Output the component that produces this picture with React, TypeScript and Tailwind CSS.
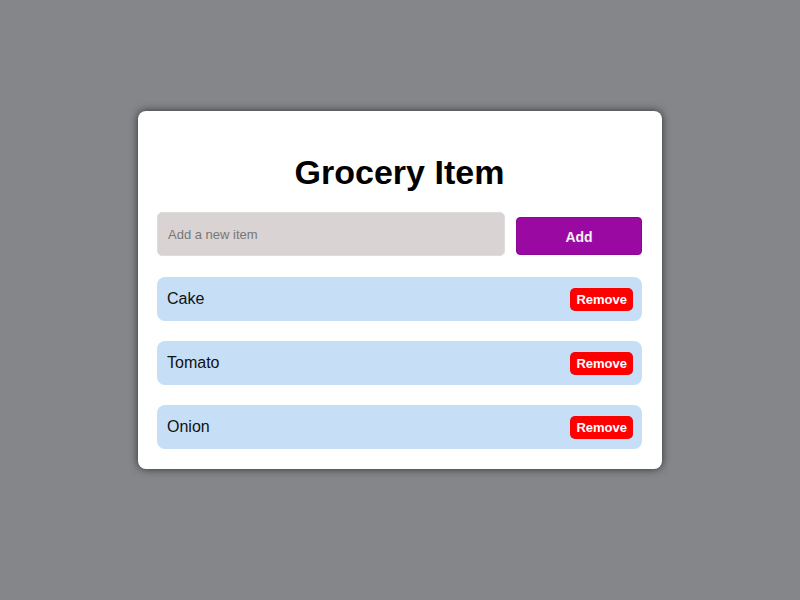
import React, { useState } from 'react';

const GroceryApp: React.FC = () => {
  const [items, setItems] = useState<string[]>(['Cake', 'Tomato', 'Onion']);
  const [text, setText] = useState('');

  const addItem = () => {
    if (!text.trim()) return;
    setItems([...items, text.trim()]);
    setText('');
  };

  return (
    <div className="min-h-screen bg-[#85868a] flex justify-center pt-[111px] font-['Liberation_Sans',Arial,sans-serif]">
      <div className="w-[524px] h-fit bg-white rounded-[8px] shadow-[0_0_8px_rgba(0,0,0,0.65)] pl-[19px] pr-[20px] pt-[20px] pb-[20px]">
        <h1 className="text-[34px] leading-[38px] font-bold text-black text-center mt-[22px] mb-[21px]">
          Grocery Item
        </h1>

        <div className="flex items-center gap-[11px] mb-[21px]">
          <input
            value={text}
            onChange={(e) => setText(e.target.value)}
            placeholder="Add a new item"
            className="flex-1 min-w-0 h-[44px] bg-[#d9d3d3] rounded-[5px] border border-[#e0dcdc] px-[10px] text-[13px] text-black placeholder:text-[#777] outline-none"
          />
          <button
            onClick={addItem}
            className="w-[126px] h-[38px] bg-[#9a0aa2] border border-[#8a0892] rounded-[4px] text-[14px] font-bold text-[#f2f2f2] mt-[4px] pt-[2px]"
          >
            Add
          </button>
        </div>

        <ul className="flex flex-col gap-[20px]">
          {items.map((item, i) => (
            <li
              key={i}
              className="h-[44px] bg-[#c6dff7] rounded-[8px] flex items-center justify-between pl-[10px] pr-[9px]"
            >
              <span className="text-[16px] text-[#111]">{item}</span>
              <button
                onClick={() => setItems(items.filter((_, j) => j !== i))}
                className="h-[23px] px-[6px] bg-[#ff0000] rounded-[5px] text-[13px] font-bold text-white leading-none"
              >
                Remove
              </button>
            </li>
          ))}
        </ul>
      </div>
    </div>
  );
};

export default function App() {
  return <GroceryApp />;
}
